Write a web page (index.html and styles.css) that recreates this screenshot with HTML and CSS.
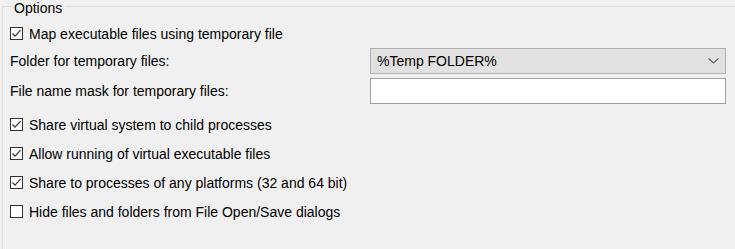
FILE: index.html
```html
<!DOCTYPE html>
<html lang="en">
<head>
    <meta charset="UTF-8">
    <title>Options</title>
    <link rel="stylesheet" href="styles.css">
</head>
<body>
    <fieldset class="group">
        <legend>Options</legend>

        <div class="check-row">
            <span class="box checked"></span>
            <span>Map executable files using temporary file</span>
        </div>

        <div class="field-grid">
            <label class="field-label" for="tempFolder">Folder for temporary files:</label>
            <div class="combo" id="tempFolder">
                <span>%Temp FOLDER%</span>
                <svg class="chevron" width="11" height="6" viewBox="0 0 11 6">
                    <path d="M0.5 0.5 L5.5 5 L10.5 0.5" fill="none" stroke="#606060" stroke-width="1.1"/>
                </svg>
            </div>

            <label class="field-label" for="nameMask">File name mask for temporary files:</label>
            <input class="text-box" type="text" id="nameMask">
        </div>

        <div class="checks">
            <div class="check-row">
                <span class="box checked"></span>
                <span>Share virtual system to child processes</span>
            </div>
            <div class="check-row">
                <span class="box checked"></span>
                <span>Allow running of virtual executable files</span>
            </div>
            <div class="check-row">
                <span class="box checked"></span>
                <span>Share to processes of any platforms (32 and 64 bit)</span>
            </div>
            <div class="check-row">
                <span class="box"></span>
                <span>Hide files and folders from File Open/Save dialogs</span>
            </div>
        </div>
    </fieldset>
</body>
</html>
```

FILE: styles.css
```css
/* General Styles */
body {
    margin: 0;
    width: 735px;
    height: 249px;
    overflow: hidden;
    background-color: #f0f0f0;
    font-family: "Liberation Sans", Arial, sans-serif;
    font-size: 14px;
    color: #000;
}

.group {
    box-sizing: border-box;
    margin: 0 0 0 2px;
    padding: 7px 0 0 7px;
    width: 733px;
    height: 249px;
    border: 1px solid #dcdcdc;
    border-right: none;
    border-bottom: none;
}

.group legend {
    margin-left: 1px;
    padding: 4px 3px 0;
    line-height: 8px;
}

.check-row {
    display: flex;
    align-items: center;
    height: 29px;
}

.box {
    box-sizing: border-box;
    width: 13px;
    height: 13px;
    margin-right: 6px;
    border: 1px solid #333;
    background-color: #fff;
}

.box.checked {
    background: #fff url("data:image/svg+xml;utf8,<svg xmlns='http://www.w3.org/2000/svg' width='11' height='11' viewBox='0 0 11 11'><path d='M1.5 5.5 L4 8.2 L9.6 2.2' fill='none' stroke='%23333' stroke-width='1.2'/></svg>") no-repeat center;
}

.field-grid {
    display: grid;
    grid-template-columns: 360px 356px;
    grid-template-rows: 26px 26px;
    row-gap: 4px;
    align-items: center;
}

.combo {
    box-sizing: border-box;
    height: 26px;
    display: flex;
    align-items: center;
    justify-content: space-between;
    padding: 0 6px;
    background-color: #e1e1e1;
    border: 1px solid #adadad;
}

.text-box {
    box-sizing: border-box;
    width: 100%;
    height: 26px;
    margin: 0;
    border: 1px solid #a0a0a0;
    background-color: #fff;
    font: inherit;
}

.checks {
    margin-top: 6px;
}
```
